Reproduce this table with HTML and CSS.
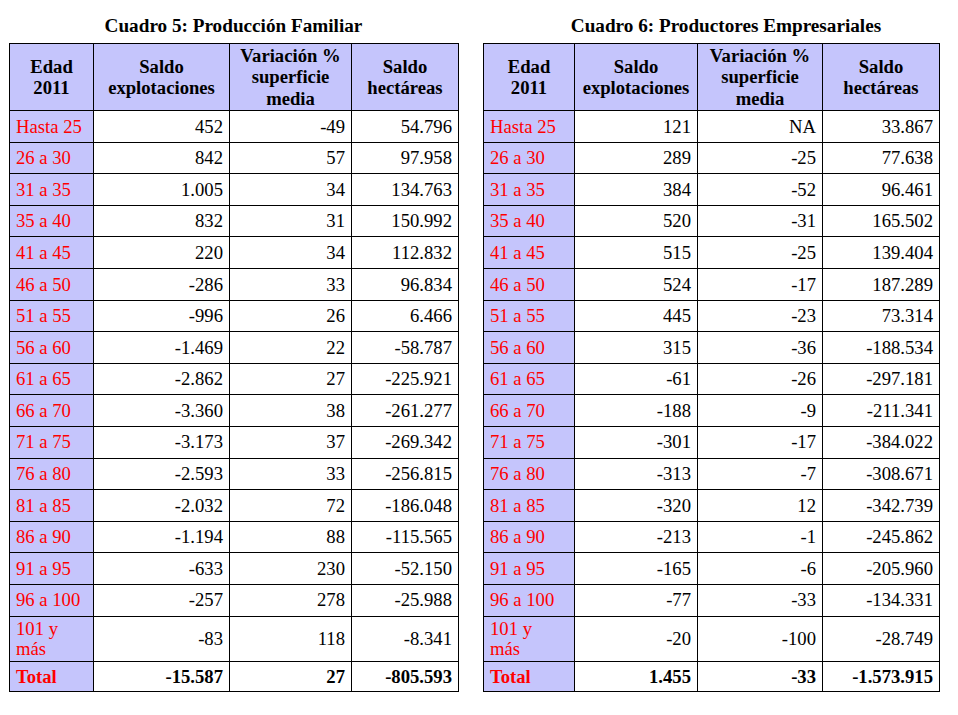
FILE: index.html
```html
<!DOCTYPE html>
<html lang="es">
<head>
<meta charset="utf-8">
<title>Cuadros 5 y 6</title>
<link rel="stylesheet" href="styles.css">
</head>
<body>
<div class="page">
  <section class="panel panel-left">
    <h2 class="title">Cuadro 5: Producción Familiar</h2>
    <table class="tbl">
      <colgroup><col class="c1"><col class="c2"><col class="c3"><col class="c4"></colgroup>
      <thead>
        <tr class="head"><th>Edad<br>2011</th><th>Saldo<br>explotaciones</th><th>Variación %<br>superficie<br>media</th><th>Saldo<br>hectáreas</th></tr>
      </thead>
      <tbody>
        <tr><th>Hasta 25</th><td>452</td><td>-49</td><td>54.796</td></tr>
        <tr><th>26 a 30</th><td>842</td><td>57</td><td>97.958</td></tr>
        <tr><th>31 a 35</th><td>1.005</td><td>34</td><td>134.763</td></tr>
        <tr><th>35 a 40</th><td>832</td><td>31</td><td>150.992</td></tr>
        <tr><th>41 a 45</th><td>220</td><td>34</td><td>112.832</td></tr>
        <tr><th>46 a 50</th><td>-286</td><td>33</td><td>96.834</td></tr>
        <tr><th>51 a 55</th><td>-996</td><td>26</td><td>6.466</td></tr>
        <tr><th>56 a 60</th><td>-1.469</td><td>22</td><td>-58.787</td></tr>
        <tr><th>61 a 65</th><td>-2.862</td><td>27</td><td>-225.921</td></tr>
        <tr><th>66 a 70</th><td>-3.360</td><td>38</td><td>-261.277</td></tr>
        <tr><th>71 a 75</th><td>-3.173</td><td>37</td><td>-269.342</td></tr>
        <tr><th>76 a 80</th><td>-2.593</td><td>33</td><td>-256.815</td></tr>
        <tr><th>81 a 85</th><td>-2.032</td><td>72</td><td>-186.048</td></tr>
        <tr><th>86 a 90</th><td>-1.194</td><td>88</td><td>-115.565</td></tr>
        <tr><th>91 a 95</th><td>-633</td><td>230</td><td>-52.150</td></tr>
        <tr><th>96 a 100</th><td>-257</td><td>278</td><td>-25.988</td></tr>
        <tr class="tall"><th>101 y<br>más</th><td>-83</td><td>118</td><td>-8.341</td></tr>
        <tr class="total"><th>Total</th><td>-15.587</td><td>27</td><td>-805.593</td></tr>
      </tbody>
    </table>
  </section>
  <section class="panel panel-right">
    <h2 class="title title-right">Cuadro 6: Productores Empresariales</h2>
    <table class="tbl">
      <colgroup><col class="d1"><col class="d2"><col class="d3"><col class="d4"></colgroup>
      <thead>
        <tr class="head"><th>Edad<br>2011</th><th>Saldo<br>explotaciones</th><th>Variación %<br>superficie<br>media</th><th>Saldo<br>hectáreas</th></tr>
      </thead>
      <tbody>
        <tr><th>Hasta 25</th><td>121</td><td>NA</td><td>33.867</td></tr>
        <tr><th>26 a 30</th><td>289</td><td>-25</td><td>77.638</td></tr>
        <tr><th>31 a 35</th><td>384</td><td>-52</td><td>96.461</td></tr>
        <tr><th>35 a 40</th><td>520</td><td>-31</td><td>165.502</td></tr>
        <tr><th>41 a 45</th><td>515</td><td>-25</td><td>139.404</td></tr>
        <tr><th>46 a 50</th><td>524</td><td>-17</td><td>187.289</td></tr>
        <tr><th>51 a 55</th><td>445</td><td>-23</td><td>73.314</td></tr>
        <tr><th>56 a 60</th><td>315</td><td>-36</td><td>-188.534</td></tr>
        <tr><th>61 a 65</th><td>-61</td><td>-26</td><td>-297.181</td></tr>
        <tr><th>66 a 70</th><td>-188</td><td>-9</td><td>-211.341</td></tr>
        <tr><th>71 a 75</th><td>-301</td><td>-17</td><td>-384.022</td></tr>
        <tr><th>76 a 80</th><td>-313</td><td>-7</td><td>-308.671</td></tr>
        <tr><th>81 a 85</th><td>-320</td><td>12</td><td>-342.739</td></tr>
        <tr><th>86 a 90</th><td>-213</td><td>-1</td><td>-245.862</td></tr>
        <tr><th>91 a 95</th><td>-165</td><td>-6</td><td>-205.960</td></tr>
        <tr><th>96 a 100</th><td>-77</td><td>-33</td><td>-134.331</td></tr>
        <tr class="tall"><th>101 y<br>más</th><td>-20</td><td>-100</td><td>-28.749</td></tr>
        <tr class="total"><th>Total</th><td>1.455</td><td>-33</td><td>-1.573.915</td></tr>
      </tbody>
    </table>
  </section>
</div>
</body>
</html>
```

FILE: styles.css
```css
html, body {
  margin: 0;
  padding: 0;
  background: #ffffff;
}

body {
  font-family: "Liberation Serif", "Times New Roman", serif;
  font-size: 18.67px;
  color: #000000;
}

.page {
  display: flex;
  align-items: flex-start;
  gap: 25px;
  padding: 15px 0 0 9px;
}

.panel {
  display: flex;
  flex-direction: column;
}

.panel-left { width: 449px; }
.panel-right { width: 456px; }

.title {
  margin: 0 0 6px 0;
  font-size: 19.2px;
  line-height: 22px;
  font-weight: bold;
  text-align: center;
}

.title-right {
  padding-left: 30px;
}

.tbl {
  border-collapse: collapse;
  table-layout: fixed;
  width: 100%;
  border: 1px solid #000;
}

.c1 { width: 84px; }
.c2 { width: 136px; }
.c3 { width: 122px; }
.c4 { width: 107px; }

.d1 { width: 91px; }
.d2 { width: 123px; }
.d3 { width: 125px; }
.d4 { width: 117px; }

.tbl th,
.tbl td {
  border: 1px solid #000;
  padding: 0 6px;
  line-height: 21.5px;
  vertical-align: middle;
}

.head th {
  background: #c5c5fc;
  font-weight: bold;
  text-align: center;
  height: 66px;
  padding: 0 2px;
}

.tbl tbody tr { height: 31.6px; }

.tbl tbody th {
  background: #c5c5fc;
  color: #ff0000;
  font-weight: normal;
  text-align: left;
  padding-left: 6px;
}

.tbl tbody td {
  text-align: right;
  padding-right: 6px;
}

.tbl tbody tr.tall { height: 45.4px; }
.tbl tbody tr.tall th { line-height: 20px; }

.tbl tbody tr.total { height: 30.3px; }
.tbl tbody tr.total th,
.tbl tbody tr.total td {
  font-weight: bold;
}
```
